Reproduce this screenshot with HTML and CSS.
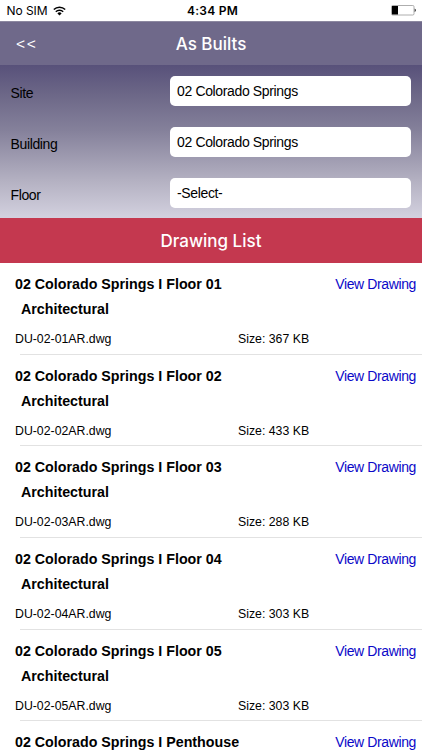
FILE: index.html
```html
<!DOCTYPE html>
<html lang="en">
<head>
<meta charset="utf-8">
<title>As Builts</title>
<link rel="stylesheet" href="styles.css">
</head>
<body>
<div class="status">
  <div class="carrier"><span>No SIM</span>
    <svg class="wifi" width="13" height="10" viewBox="0 0 13 10"><path d="M.8 3.500a8.200 8.200 0 0 1 11.400 0M2.800 5.700a5.300 5.300 0 0 1 7.400 0" fill="none" stroke="#000" stroke-width="1.500"/><path d="M4.400 7.400a3 3 0 0 1 4.200 0L6.500 9.600z"/></svg>
  </div>
  <div class="clock">4:34 PM</div>
  <div class="power">
    <svg class="battery" width="26" height="11" viewBox="0 0 26 11"><rect x=".5" y=".5" width="22.500" height="9.500" rx="1.200" fill="#fff" stroke="#999" stroke-width=".8"/><path d="M1 1h6v8.500H1z"/><path d="M23.600 3.500c1.800.7 1.800 2.800 0 3.500z" fill="#333"/></svg>
  </div>
</div>
<header class="nav"><span class="back">&lt;&lt;</span><h1>As Builts</h1></header>
<form class="filters">
  <div class="field"><label>Site</label><div class="input">02 Colorado Springs</div></div>
  <div class="field"><label>Building</label><div class="input">02 Colorado Springs</div></div>
  <div class="field"><label>Floor</label><div class="input">-Select-</div></div>
</form>
<h2 class="section">Drawing List</h2>
<main class="list">
  <article class="item"><div class="top"><h3>02 Colorado Springs I Floor 01</h3><a class="view">View Drawing</a></div><p class="kind">Architectural</p><div class="meta"><span class="file">DU-02-01AR.dwg</span><span class="size">Size: 367 KB</span></div></article>
  <article class="item"><div class="top"><h3>02 Colorado Springs I Floor 02</h3><a class="view">View Drawing</a></div><p class="kind">Architectural</p><div class="meta"><span class="file">DU-02-02AR.dwg</span><span class="size">Size: 433 KB</span></div></article>
  <article class="item"><div class="top"><h3>02 Colorado Springs I Floor 03</h3><a class="view">View Drawing</a></div><p class="kind">Architectural</p><div class="meta"><span class="file">DU-02-03AR.dwg</span><span class="size">Size: 288 KB</span></div></article>
  <article class="item"><div class="top"><h3>02 Colorado Springs I Floor 04</h3><a class="view">View Drawing</a></div><p class="kind">Architectural</p><div class="meta"><span class="file">DU-02-04AR.dwg</span><span class="size">Size: 303 KB</span></div></article>
  <article class="item"><div class="top"><h3>02 Colorado Springs I Floor 05</h3><a class="view">View Drawing</a></div><p class="kind">Architectural</p><div class="meta"><span class="file">DU-02-05AR.dwg</span><span class="size">Size: 303 KB</span></div></article>
  <article class="item last"><div class="top"><h3>02 Colorado Springs I Penthouse</h3><a class="view">View Drawing</a></div></article>
</main>
</body>
</html>
```
FILE: styles.css
```css
* { box-sizing: border-box; margin: 0; }
body { height: 750px; overflow: hidden; background: #fff; color: #000; font-family: "Liberation Sans", Arial, sans-serif; }
.status { display: grid; grid-template-columns: 1fr auto 1fr; height: 21px; align-items: center; font: 12px/21px Inter, sans-serif; }
.carrier { display: flex; align-items: center; gap: 5px; padding-left: 6.5px; letter-spacing: -.05px; }
.clock { font-weight: 600; font-size: 12px; letter-spacing: .25px; padding-left: 3px; }
.power { display: flex; justify-content: flex-end; padding-right: 5px; }
.nav { display: grid; grid-template-columns: 100px 1fr 100px; align-items: center; height: 44px; background: #6f698a; color: #fff; border-top: 1px solid #8c88a0; font-family: Inter, sans-serif; }
.back { padding-left: 16px; font: 15.5px/44px "Liberation Sans", sans-serif; letter-spacing: 1.8px; }
.nav h1 { font-size: 17px; line-height: 42px; font-weight: 500; text-align: center; }
.filters { height: 153px; padding: 11px 11px 0 10px; background: linear-gradient(#58517a, #6d6888 20%, #85819b 43%, #b3b0c1 75%, #d3d1df); }
.field { display: grid; grid-template-columns: 160px 1fr; height: 51px; align-items: start; font-size: 14px; letter-spacing: -.36px; }
.field label { padding: 9px 0 0 .5px; line-height: 17px; }
.input { height: 30px; padding-left: 7px; line-height: 30px; background: #fff; border-radius: 5px; }
.section { height: 45px; background: #c4384f; color: #fff; text-align: center; font: 500 17px/46px Inter, sans-serif; }
.list { height: 487px; overflow: hidden; }
.item { height: 91.67px; padding: 12px 6px 0 15px; background: linear-gradient(#e2e2e2, #e2e2e2) 20px 100% / 100% 1px no-repeat; }
.item.last { height: 28px; background: none; }
.top { display: flex; justify-content: space-between; line-height: 18px; }
.top h3, .kind { font-size: 14.25px; font-weight: 700; }
.view { color: #0b08c8; font-size: 14px; letter-spacing: -.38px; }
.kind { padding: 7px 0 0 6px; line-height: 18px; }
.meta { display: grid; grid-template-columns: 223px 1fr; padding-top: 13px; font-size: 12.3px; line-height: 17px; }
```
